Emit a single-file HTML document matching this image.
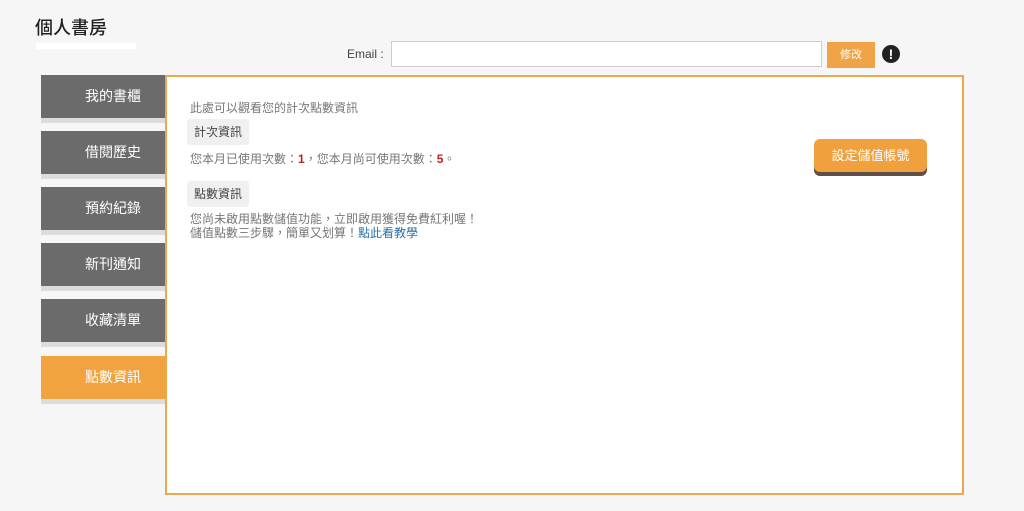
<!DOCTYPE html>
<html><head><meta charset="utf-8"><style>
body{margin:0;width:1024px;height:511px;background:#f6f6f6;font-family:"Liberation Sans","Noto Sans CJK TC",sans-serif;position:relative;overflow:hidden;color:#555}
.a{position:absolute}
.nav{position:absolute;left:41px;width:124px;height:43px;background:#6b6b6b;color:#fff;font-size:14px;line-height:43px;text-align:left;box-shadow:0 5px 0 #dcdcdc}
.nav span{position:absolute;left:44px}
.tag{position:absolute;left:187px;background:#f0f0f0;color:#444;font-size:12px;padding:0 7px;height:26px;line-height:26px;border-radius:3px}
.t{font-size:12px;color:#777;position:absolute;left:190px;white-space:nowrap}
</style></head><body>
<div class="a" style="left:35px;top:14px;font-size:18px;color:#222;font-weight:500">個人書房</div>
<div class="a" style="left:36px;top:43px;width:100px;height:6px;background:#fff"></div>
<div class="a" style="left:347px;top:47px;font-size:12px;color:#444">Email :</div>
<div class="a" style="left:391px;top:41px;width:429px;height:24px;background:#fff;border:1px solid #ccc"></div>
<div class="a" style="left:827px;top:42px;width:48px;height:26px;background:#f0a347;color:#fff;font-size:11px;line-height:26px;text-align:center">修改</div>
<div class="a" style="left:882px;top:45px;width:18px;height:18px;border-radius:50%;background:#222;color:#fff;font-size:14px;font-weight:bold;text-align:center;line-height:18px">!</div>
<div class="a" style="left:165px;top:75px;width:795px;height:416px;background:#fff;border:2px solid #e9a94c"></div>
<div class="nav" style="top:75px"><span>我的書櫃</span></div>
<div class="nav" style="top:131px"><span>借閱歷史</span></div>
<div class="nav" style="top:187px"><span>預約紀錄</span></div>
<div class="nav" style="top:243px"><span>新刊通知</span></div>
<div class="nav" style="top:299px"><span>收藏清單</span></div>
<div class="nav" style="top:356px;background:#f0a33f"><span>點數資訊</span></div>
<div class="t" style="top:99px">此處可以觀看您的計次點數資訊</div>
<div class="tag" style="top:119px">計次資訊</div>
<div class="t" style="top:150px">您本月已使用次數：<b style="color:#b22">1</b>，您本月尚可使用次數：<b style="color:#b22">5</b>。</div>
<div class="tag" style="top:181px">點數資訊</div>
<div class="t" style="top:212px;line-height:14px">您尚未啟用點數儲值功能，立即啟用獲得免費紅利喔！<br>儲值點數三步驟，簡單又划算！<span style="color:#2a6fa8">點此看教學</span></div>
<div class="a" style="left:814px;top:139px;width:113px;height:33px;background:#f0a03c;border-radius:6px;box-shadow:0 4px 0 #5e5048;color:#fff;font-size:13px;line-height:33px;text-align:center">設定儲值帳號</div>
</body></html>
